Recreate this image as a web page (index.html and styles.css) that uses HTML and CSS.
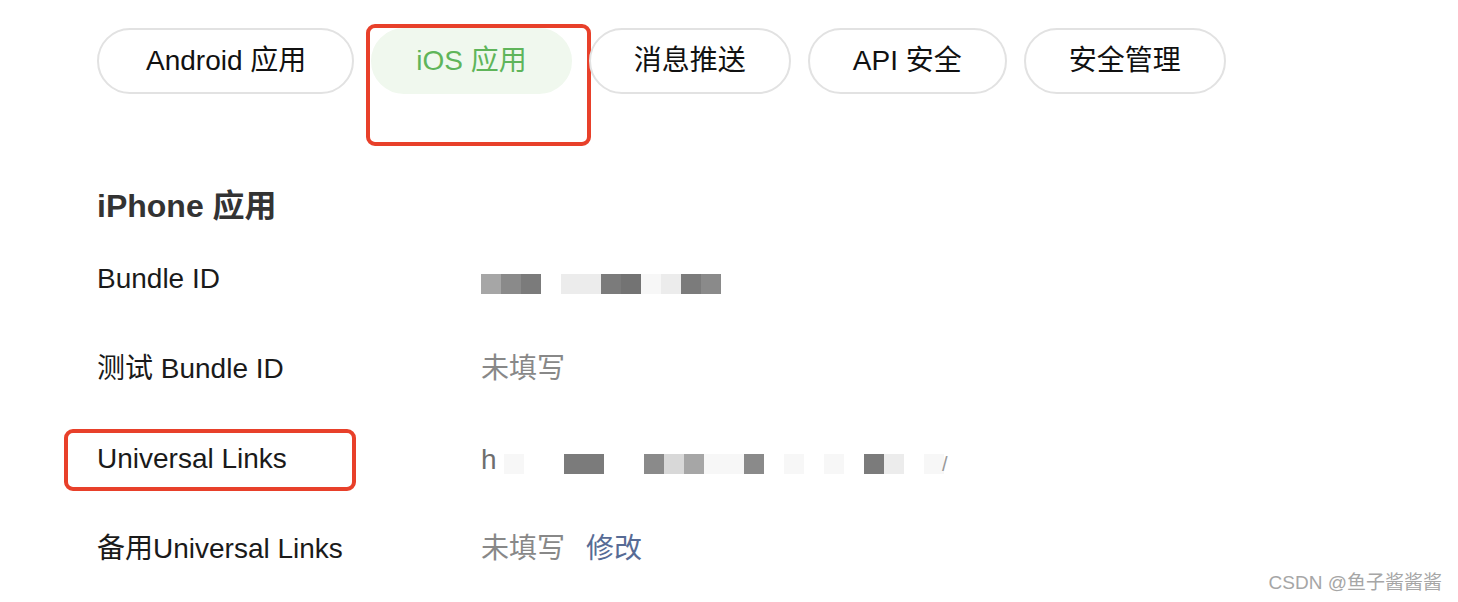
FILE: index.html
```html
<!DOCTYPE html>
<html lang="zh-CN">
<head>
    <meta charset="UTF-8">
    <title>iOS 应用</title>
    <link rel="stylesheet" href="styles.css">
</head>
<body>

<div class="page">
    <div class="tabs">
        <div class="tab tab-wide">Android 应用</div>
        <div class="tab tab-active">iOS 应用<span class="mark mark-tab"></span></div>
        <div class="tab">消息推送</div>
        <div class="tab">API 安全</div>
        <div class="tab">安全管理</div>
    </div>

    <h2 class="section-title">iPhone 应用</h2>

    <div class="info-row">
        <div class="info-label">Bundle ID</div>
        <div class="info-value">
            <div class="mosaic">
                <span class="px s2"></span><span class="px s3"></span><span class="px s4"></span><span class="px s0"></span>
                <span class="px s1"></span><span class="px s1"></span><span class="px s4"></span><span class="px s5"></span>
                <span class="px s6"></span><span class="px s1"></span><span class="px s4"></span><span class="px s3"></span>
            </div>
        </div>
    </div>

    <div class="info-row">
        <div class="info-label">测试 Bundle ID</div>
        <div class="info-value muted">未填写</div>
    </div>

    <div class="info-row">
        <div class="info-label">Universal Links<span class="mark mark-label"></span></div>
        <div class="info-value">
            <div class="mosaic">
                <span class="lead">h</span>
                <span class="px s6"></span><span class="px s0"></span><span class="px s0"></span><span class="px s4"></span>
                <span class="px s4"></span><span class="px s0"></span><span class="px s0"></span><span class="px s3"></span>
                <span class="px s7"></span><span class="px s2"></span><span class="px s6"></span><span class="px s6"></span>
                <span class="px s3"></span><span class="px s0"></span><span class="px s6"></span><span class="px s0"></span>
                <span class="px s6"></span><span class="px s0"></span><span class="px s4"></span><span class="px s1"></span>
                <span class="px s0"></span><span class="px s6"></span>
                <span class="tail">/</span>
            </div>
        </div>
    </div>

    <div class="info-row">
        <div class="info-label">备用Universal Links</div>
        <div class="info-value"><span class="muted">未填写</span><a class="link" href="#">修改</a></div>
    </div>
</div>

<div class="watermark">CSDN @鱼子酱酱酱</div>

</body>
</html>
```

FILE: styles.css
```css
body {
    margin: 0;
    font-family: "Liberation Sans", "Noto Sans CJK SC", sans-serif;
    background-color: #fff;
    color: #1a1a1a;
}
.page {
    padding: 28px 0 0 97px;
}
.tabs {
    display: flex;
    gap: 17px;
}
.tab {
    position: relative;
    height: 66px;
    box-sizing: border-box;
    padding: 0 43px;
    border: 2px solid #e2e2e2;
    border-radius: 33px;
    font-size: 28px;
    line-height: 62px;
    color: #111;
    white-space: nowrap;
}
.tab-wide {
    padding: 0 46px 0 47px;
}
.tab-active {
    border-color: #f0f8ee;
    background-color: #f0f8ee;
    color: #5fb55a;
}
.mark {
    position: absolute;
    border: 4px solid #e8402a;
    border-radius: 9px;
}
.mark-tab {
    left: -7px;
    top: -6px;
    width: 217px;
    height: 114px;
}
.mark-label {
    left: -33px;
    top: -13px;
    width: 284px;
    height: 54px;
}
.section-title {
    margin: 91px 0 7px;
    font-size: 32px;
    line-height: 42px;
    font-weight: bold;
    color: #333;
}
.info-row {
    display: flex;
    align-items: center;
    height: 90px;
    font-size: 28px;
}
.info-label {
    position: relative;
    width: 384px;
    line-height: 34px;
    color: #1a1a1a;
}
.info-value {
    display: flex;
    align-items: center;
    line-height: 34px;
}
.muted {
    color: #888;
}
.link {
    margin-left: 21px;
    color: #576b95;
    text-decoration: none;
}
.mosaic {
    display: flex;
    align-items: center;
    margin-top: 10px;
}
.mosaic .lead {
    width: 23px;
    margin-top: -8px;
    color: #6e6e6e;
}
.mosaic .tail {
    color: #999;
    font-size: 20px;
    margin-left: -2px;
}
.px {
    width: 20px;
    height: 20px;
}
.s0 { background-color: #fff; }
.s1 { background-color: #ececec; }
.s2 { background-color: #a6a6a6; }
.s3 { background-color: #8a8a8a; }
.s4 { background-color: #7b7b7b; }
.s5 { background-color: #737373; }
.s6 { background-color: #f7f7f7; }
.s7 { background-color: #d8d8d8; }
.watermark {
    position: absolute;
    right: 16px;
    bottom: 8px;
    font-size: 19px;
    color: #a6a6a6;
}
```
